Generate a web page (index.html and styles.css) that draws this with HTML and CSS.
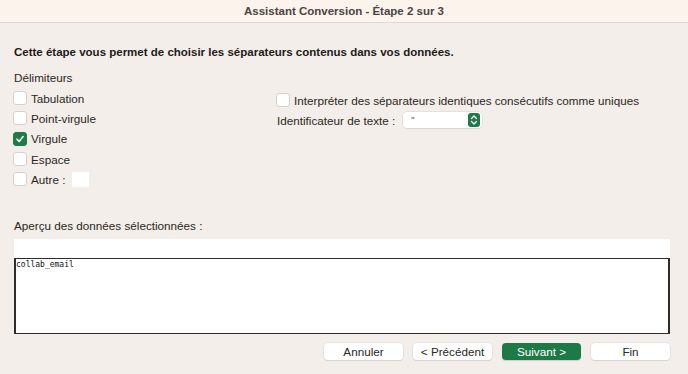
FILE: index.html
```html
<!DOCTYPE html>
<html lang="fr">
<head>
  <meta charset="UTF-8" />
  <title>Assistant Conversion</title>
  <link rel="stylesheet" href="styles.css">
</head>
<body>
  <div class="window">
    <div class="titlebar">Assistant Conversion - Étape 2 sur 3</div>
    <div class="content">
      <h1 class="intro">Cette étape vous permet de choisir les séparateurs contenus dans vos données.</h1>
      <div class="options">
        <div class="col-left">
          <div class="group-label">Délimiteurs</div>
          <label class="check"><span class="box"></span>Tabulation</label>
          <label class="check"><span class="box"></span>Point-virgule</label>
          <label class="check"><span class="box checked">
            <svg viewBox="0 0 14 14" width="14" height="14"><path d="M3.5 7.2 L6 9.8 L10.6 4.2" fill="none" stroke="#fff" stroke-width="1.8" stroke-linecap="round" stroke-linejoin="round"/></svg>
          </span>Virgule</label>
          <label class="check"><span class="box"></span>Espace</label>
          <label class="check"><span class="box"></span>Autre :<span class="other-field"></span></label>
        </div>
        <div class="col-right">
          <label class="check"><span class="box"></span>Interpréter des séparateurs identiques consécutifs comme uniques</label>
          <div class="qualifier">
            <span>Identificateur de texte :</span>
            <div class="select">
              <span class="select-value">"</span>
              <span class="stepper">
                <svg viewBox="0 0 12 14" width="12" height="14"><path d="M3.5 5.5 L6 3 L8.5 5.5 M3.5 8.5 L6 11 L8.5 8.5" fill="none" stroke="#fff" stroke-width="1.3" stroke-linecap="round" stroke-linejoin="round"/></svg>
              </span>
            </div>
          </div>
        </div>
      </div>
      <div class="preview-label">Aperçu des données sélectionnées :</div>
      <div class="preview">
        <div class="preview-head"></div>
        <div class="preview-body">collab_email</div>
      </div>
      <div class="buttons">
        <button class="btn">Annuler</button>
        <button class="btn">&lt; Précédent</button>
        <button class="btn primary">Suivant &gt;</button>
        <button class="btn">Fin</button>
      </div>
    </div>
  </div>
</body>
</html>
```

FILE: styles.css
```css
body {
  margin: 0;
  font-family: 'Liberation Sans', Arial, sans-serif;
  color: #2b2724;
  background-color: #f3eee9;
  width: 688px;
  height: 374px;
  overflow: hidden;
}

.window {
  height: 374px;
  display: flex;
  flex-direction: column;
}

.titlebar {
  height: 22px;
  line-height: 22px;
  background-color: #fcf3ec;
  border-bottom: 1px solid #dfd9d4;
  text-align: center;
  font-size: 11.5px;
  font-weight: 700;
  color: #4a4542;
}

.content {
  padding: 22px 18px 0 14px;
}

.intro {
  margin: 0;
  font-size: 11.5px;
  font-weight: 700;
  color: #1e1b19;
  line-height: 15px;
}

.options {
  display: flex;
  margin-top: 11px;
}

.col-left {
  width: 263px;
}

.group-label {
  font-size: 11.7px;
  line-height: 14px;
  margin-bottom: 3px;
}

.check {
  display: flex;
  align-items: center;
  height: 20.3px;
  font-size: 11.7px;
}

.box {
  width: 12px;
  height: 12px;
  border: 1px solid #d6d1cc;
  border-radius: 3px;
  background-color: #fff;
  margin-right: 4px;
  margin-left: -1px;
  display: flex;
  align-items: center;
  justify-content: center;
}

.box.checked {
  background-color: #1f7a48;
  border-color: #1f7a48;
}

.other-field {
  width: 17px;
  height: 15px;
  background-color: #fff;
  margin-left: 7px;
}

.col-right {
  padding-top: 19px;
}

.qualifier {
  display: flex;
  align-items: center;
  height: 20px;
  font-size: 11.7px;
}

.select {
  display: flex;
  align-items: center;
  justify-content: space-between;
  width: 79px;
  height: 16px;
  margin-left: 8px;
  background-color: #fff;
  border-radius: 4px;
  box-shadow: 0 0 0 0.5px #d8d3ce, 0 1px 1px rgba(0, 0, 0, 0.08);
  padding-left: 8px;
  padding-right: 2px;
  box-sizing: border-box;
}

.select-value {
  font-size: 9px;
  color: #444;
  line-height: 12px;
}

.stepper {
  width: 12px;
  height: 14px;
  background-color: #1f7a48;
  border-radius: 3px;
  display: flex;
}

.preview-label {
  margin-top: 30px;
  font-size: 11.7px;
  line-height: 14px;
}

.preview {
  margin-top: 6px;
  width: 656px;
}

.preview-head {
  height: 19px;
  background-color: #fff;
}

.preview-body {
  height: 76px;
  background-color: #fff;
  border: 1px solid #2d2d2d;
  border-left-width: 2px;
  border-right-width: 2px;
  box-sizing: border-box;
  font-family: 'DejaVu Sans Mono', monospace;
  font-size: 8px;
  line-height: 11px;
  color: #111;
}

.buttons {
  display: flex;
  justify-content: flex-end;
  gap: 10px;
  margin-top: 9px;
  width: 656px;
}

.btn {
  width: 79px;
  height: 17px;
  border: none;
  border-radius: 4px;
  background-color: #fff;
  box-shadow: 0 0 0 0.5px #dcd7d2, 0 1px 1px rgba(0, 0, 0, 0.12);
  font-family: 'Liberation Sans', Arial, sans-serif;
  font-size: 11.7px;
  color: #2b2724;
  padding: 0;
}

.btn.primary {
  background-color: #1d7a47;
  color: #fff;
  box-shadow: 0 1px 1px rgba(0, 0, 0, 0.15);
}
```
